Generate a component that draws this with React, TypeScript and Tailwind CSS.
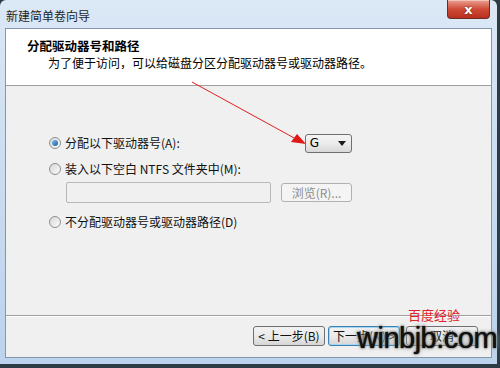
const cjk = "font-['SimSun','Noto_Sans_CJK_SC',sans-serif]";

function Radio({ checked }: { checked?: boolean }) {
  return (
    <span className="flex h-[12px] w-[12px] items-center justify-center rounded-full border border-[#8e8f8f] bg-gradient-to-br from-[#d8d8d8] to-[#fbfbfb]">
      {checked && (
        <span className="h-[6px] w-[6px] rounded-full bg-gradient-to-br from-[#7fc4f0] to-[#1b5aa0]" />
      )}
    </span>
  );
}

function Button({ children, primary }: { children: React.ReactNode; primary?: boolean }) {
  return (
    <div
      className={`flex h-[20px] w-[72px] items-center justify-center rounded-[3px] border bg-gradient-to-b from-[#f2f2f2] via-[#ebebeb] to-[#d6d6d6] text-[12px] text-[#111] ${
        primary ? "border-[#3c7fb1] shadow-[inset_0_0_0_1px_#a3d8f5]" : "border-[#707070]"
      }`}
    >
      {children}
    </div>
  );
}

export default function App() {
  return (
    <div className={`relative h-[368px] w-[500px] overflow-hidden bg-[#2d3b44] ${cjk}`}>
      <div className="flex h-[364px] w-[497px] flex-col rounded-t-[6px] bg-gradient-to-b from-[#dbe8f6] via-[#c9dcf0] to-[#bcd3ec] px-[5px] pb-[6px]">
        {/* Title bar */}
        <div className="flex h-[28px] shrink-0 items-start justify-between">
          <span className="pl-[1px] pt-[7px] text-[12px] text-[#1f1f1f] font-['Noto_Sans_CJK_SC',sans-serif]">新建简单卷向导</span>
          <div className="mr-[2px] flex h-[19px] w-[43px] items-center justify-center rounded-b-[4px] border border-t-0 border-[#6d2b22] bg-gradient-to-b from-[#e8a093] via-[#cf4b37] to-[#b8301d] shadow-[inset_0_1px_0_#f3c3b8]">
            <span className="text-[13px] font-bold leading-none text-white font-['DejaVu_Sans',sans-serif] [text-shadow:0_0_2px_#5a1a10]">x</span>
          </div>
        </div>

        {/* Client */}
        <div className="flex flex-1 flex-col border border-[#8496ab] bg-[#f0f0f0]">
          <div className="h-[57px] shrink-0 border-b border-[#a0a0a0] bg-white pl-[21px] pt-[9px]">
            <div className="text-[12.5px] font-bold leading-[16px] text-black">分配驱动器号和路径</div>
            <div className="pl-[21px] pt-[1px] text-[12px] leading-[15px] text-black">
              为了便于访问，可以给磁盘分区分配驱动器号或驱动器路径。
            </div>
          </div>

          <div className="relative flex flex-1 flex-col border-b border-[#a0a0a0] pl-[43px] pt-[48px]">
            <div className="flex h-[18px] items-center">
              <Radio checked />
              <span className="ml-[4px] text-[12px] text-[#111]">分配以下驱动器号(A):</span>
              <div className="ml-[125px] flex h-[19px] w-[47px] items-center justify-between rounded-[3px] border border-[#707070] bg-gradient-to-b from-[#f4f4f4] via-[#ebebeb] to-[#d8d8d8] pl-[4px] pr-[5px]">
                <span className="text-[12px] text-black font-['DejaVu_Sans',sans-serif]">G</span>
                <span className="h-0 w-0 border-x-[4px] border-t-[5px] border-x-transparent border-t-[#1a1a1a]" />
              </div>
            </div>
            <div className="mt-[10px] flex h-[14px] items-center">
              <Radio />
              <span className="ml-[4px] text-[12px] text-[#111]">装入以下空白 NTFS 文件夹中(M):</span>
            </div>
            <div className="ml-[17px] mt-[6px] flex items-center">
              <div className="h-[21px] w-[205px] rounded-[2px] border border-[#b8b8b8] bg-[#f0f0f0]" />
              <div className="ml-[10px] flex h-[19px] w-[71px] items-center justify-center rounded-[3px] border border-[#adb2b5] bg-[#f4f4f4] text-[12px] text-[#8d8d8d]">
                浏览(R)...
              </div>
            </div>
            <div className="mt-[10px] flex h-[18px] items-center">
              <Radio />
              <span className="ml-[4px] text-[12px] text-[#111]">不分配驱动器号或驱动器路径(D)</span>
            </div>
          </div>

          <div className="flex h-[41px] shrink-0 items-center border-t border-white pl-[247px] pb-[2px]">
            <div className="flex gap-[3px]">
              <Button>&lt; 上一步(B)</Button>
              <Button primary>下一步(N) &gt;</Button>
              <div className="ml-[3px]">
                <Button>取消</Button>
              </div>
            </div>
          </div>
        </div>
      </div>

      {/* annotation arrow */}
      <svg className="pointer-events-none absolute left-0 top-0" width="500" height="368">
        <line x1="192" y1="82" x2="296" y2="139" stroke="#e02020" strokeWidth="1" />
        <polygon points="306,144 291,142 297,134" fill="#e01818" />
      </svg>

      {/* watermark */}
      <span className="absolute left-[408px] top-[305px] text-[13px] text-[#e0242c] font-['Noto_Sans_CJK_SC',sans-serif]">百度经验</span>
      <span className="absolute left-[357px] top-[320px] text-[29px] leading-[36px] tracking-[-0.5px] text-[#111] font-['Liberation_Sans',sans-serif] [text-shadow:0_0_1px_#111,0_0_2px_#888,0_0_3px_#999,0_0_5px_#aaa]">
        winbjb.com
      </span>
    </div>
  );
}
